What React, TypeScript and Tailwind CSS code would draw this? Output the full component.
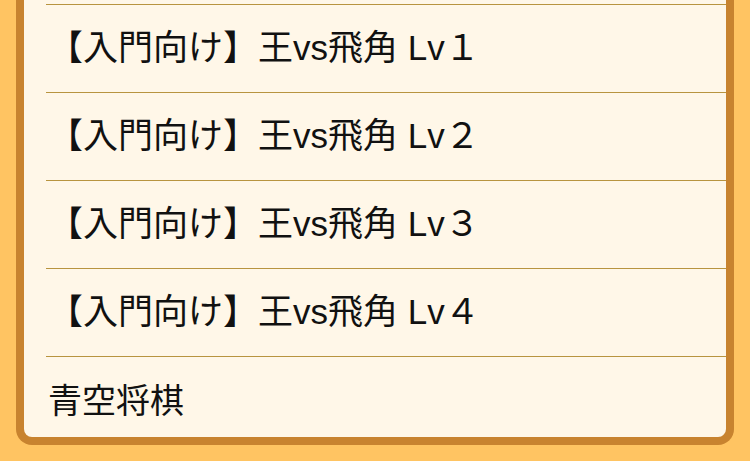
const items = [
  '【入門向け】王vs飛角 Lv１',
  '【入門向け】王vs飛角 Lv２',
  '【入門向け】王vs飛角 Lv３',
  '【入門向け】王vs飛角 Lv４',
];

export default function App() {
  return (
    <div
      className="w-[750px] h-[461px] bg-[#ffc462] overflow-hidden"
      style={{ fontFamily: '"Liberation Sans", "Noto Sans CJK JP", sans-serif' }}
    >
      <div className="ml-[16px] w-[718px] bg-[#fff7e8] border-x-8 border-b-8 border-[#c8832f] rounded-b-[16px]">
        <div className="h-[4px]" />
        <ul className="pl-[22px]">
          {items.map((label) => (
            <li
              key={label}
              className="h-[88px] border-t border-[#b8943f] flex items-center text-[35px] text-[#111] pl-[2px]"
            >
              {label}
            </li>
          ))}
          <li className="h-[81px] border-t border-[#b8943f] flex items-center pt-[8px] text-[34px] text-[#111] pl-[2px]">
            青空将棋
          </li>
        </ul>
      </div>
    </div>
  );
}
